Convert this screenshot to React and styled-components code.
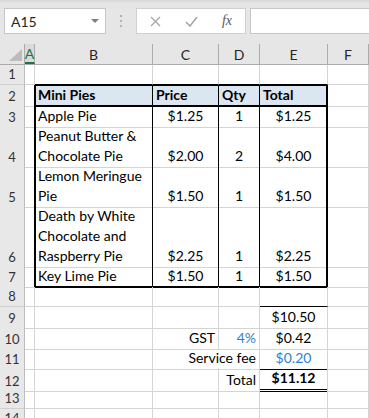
import styled, { createGlobalStyle } from 'styled-components'

const GlobalStyle = createGlobalStyle`
  html, body {
    margin: 0;
    padding: 0;
    background: #ffffff;
  }
  body {
    font-family: Lato, "Liberation Sans", sans-serif;
  }
`

const COLS = '25px 10px 118px 66px 41px 68px 1fr'
const GRID = '#d4d4d4'
const BLUE = '#2f80d0'

const Window = styled.div`
  width: 369px;
  height: 418px;
  overflow: hidden;
  background: #fff;
`

/* formula bar */
const Toolbar = styled.div`
  height: 44px;
  box-sizing: border-box;
  display: flex;
  align-items: flex-start;
  padding: 8px 0 0 4px;
  background: linear-gradient(#d8d8d8 0, #e6e6e6 4px, #e6e6e6 100%);
`

const NameBox = styled.div`
  width: 102px;
  height: 26px;
  box-sizing: border-box;
  border: 1px solid #c6c6c6;
  background: #fff;
  display: flex;
  align-items: center;
  justify-content: space-between;
  padding: 0 6px 0 6px;
  font-size: 14px;
  color: #262626;
`

const Caret = styled.span`
  width: 0;
  height: 0;
  border-left: 4px solid transparent;
  border-right: 4px solid transparent;
  border-top: 4px solid #808080;
`

const Grip = styled.div`
  width: 30px;
  height: 26px;
  display: flex;
  flex-direction: column;
  align-items: center;
  justify-content: center;
  gap: 3px;

  span {
    width: 2px;
    height: 2px;
    background: #b3b3b3;
  }
`

const FxButtons = styled.div`
  width: 110px;
  height: 26px;
  box-sizing: border-box;
  border: 1px solid #d0d0d0;
  background: #fff;
  display: flex;
`

const FxSlot = styled.div`
  width: 36px;
  display: flex;
  align-items: center;
  justify-content: center;
  font-family: "Liberation Serif", serif;
  font-style: italic;
  font-size: 14px;
  color: #595959;
`

const FormulaInput = styled.div`
  flex: 1;
  height: 26px;
  margin-left: 4px;
  box-sizing: border-box;
  border: 1px solid #c6c6c6;
  border-right: none;
  background: #fff;
`

/* sheet */
const HeaderRow = styled.div`
  display: grid;
  grid-template-columns: ${COLS};
  height: 20px;
  background: #e6e6e6;
  border-bottom: 1px solid #ababab;
`

const ColHead = styled.div`
  box-sizing: border-box;
  display: flex;
  align-items: center;
  justify-content: center;
  font-size: 14px;
  color: ${p => (p.$active ? '#217346' : '#262626')};
  background: ${p => (p.$active ? '#dadada' : 'transparent')};
  border-right: 1px solid #ababab;
  border-bottom: ${p => (p.$active ? '2px solid #217346' : 'none')};
`

const Corner = styled.div`
  border-right: 1px solid #ababab;
  display: flex;
  align-items: flex-end;
  justify-content: flex-end;
  padding: 0 2px 3px 0;

  span {
    width: 0;
    height: 0;
    border-left: 13px solid transparent;
    border-bottom: 12px solid #bcbcbc;
  }
`

const Row = styled.div`
  display: grid;
  grid-template-columns: ${COLS};
  height: ${p => p.$h}px;
`

const RowHead = styled.div`
  box-sizing: border-box;
  background: #e8e8e8;
  border-right: 1px solid #bdbdbd;
  border-bottom: 1px solid #cfcfcf;
  display: flex;
  align-items: flex-end;
  justify-content: center;
  line-height: 19px;
  font-size: 13px;
  color: #333;
`

const edge = v => (v === 'k' ? '1px solid #000' : v === 'n' ? '1px solid transparent' : v === 'd' ? '3px double #000' : `1px solid ${GRID}`)

const thick = s => {
  if (!s) return 'none'
  const parts = []
  if (s.includes('t')) parts.push('inset 0 1px 0 #000')
  if (s.includes('b')) parts.push('inset 0 -1px 0 #000')
  if (s.includes('l')) parts.push('inset 1px 0 0 #000')
  if (s.includes('r')) parts.push('inset -1px 0 0 #000')
  return parts.join(', ')
}

const Cell = styled.div`
  box-sizing: border-box;
  min-width: 0;
  display: flex;
  flex-direction: column;
  justify-content: flex-end;
  align-items: ${p => (p.$a === 'c' ? 'center' : p.$a === 'r' ? 'flex-end' : 'flex-start')};
  padding: 0 3px 1px 3px;
  border-right: ${p => edge(p.$r)};
  border-bottom: ${p => edge(p.$b)};
  box-shadow: ${p => thick(p.$th)};
  background: ${p => (p.$head ? '#dce6f1' : 'transparent')};
  font-size: 14px;
  line-height: 20px;
  font-weight: ${p => (p.$bold ? 700 : 400)};
  color: ${p => (p.$blue ? BLUE : '#000')};
  white-space: nowrap;
`

// table B2:E7 border helpers
const head = (t, first) => ({ t, a: 'l', head: true, bold: true, r: 'k', b: 'k', th: first ? 'tbl' : 'tb' })
const body = (t, a, opts = {}) => ({ t, a, r: 'k', b: 'g', ...opts })

const EMPTY = {}
const rows = [
  { n: 1, h: 20, cells: [EMPTY, { b: 'k' }, { b: 'k' }, { b: 'k' }, { b: 'k' }, EMPTY] },
  {
    n: 2, h: 21,
    cells: [{ r: 'k' }, head('Mini Pies', true), head('Price'), head('Qty'), { ...head('Total'), th: 'tbr' }, EMPTY],
  },
  {
    n: 3, h: 20,
    cells: [{ r: 'k' }, body('Apple Pie', 'l', { th: 'l' }), body('$1.25', 'c'), body('1', 'c'), body('$1.25', 'c', { th: 'r' }), EMPTY],
  },
  {
    n: 4, h: 40,
    cells: [{ r: 'k' }, body(['Peanut Butter &', 'Chocolate Pie'], 'l', { th: 'l' }), body('$2.00', 'c'), body('2', 'c'), body('$4.00', 'c', { th: 'r' }), EMPTY],
  },
  {
    n: 5, h: 40,
    cells: [{ r: 'k' }, body(['Lemon Meringue', 'Pie'], 'l', { th: 'l' }), body('$1.50', 'c'), body('1', 'c'), body('$1.50', 'c', { th: 'r' }), EMPTY],
  },
  {
    n: 6, h: 60,
    cells: [{ r: 'k' }, body(['Death by White', 'Chocolate and', 'Raspberry Pie'], 'l', { th: 'l' }), body('$2.25', 'c'), body('1', 'c'), body('$2.25', 'c', { th: 'r' }), EMPTY],
  },
  {
    n: 7, h: 21,
    cells: [{ r: 'k' }, body('Key Lime Pie', 'l', { th: 'lb', b: 'k' }), body('$1.50', 'c', { th: 'b', b: 'k' }), body('1', 'c', { th: 'b', b: 'k' }), body('$1.50', 'c', { th: 'rb', b: 'k' }), EMPTY],
  },
  { n: 8, h: 20, cells: [EMPTY, EMPTY, EMPTY, EMPTY, { b: 'k' }, EMPTY] },
  { n: 9, h: 21, cells: [EMPTY, EMPTY, EMPTY, EMPTY, { t: '$10.50', a: 'c' }, EMPTY] },
  { n: 10, h: 20, cells: [EMPTY, EMPTY, { t: 'GST', a: 'r' }, { t: '4%', a: 'r', blue: true }, { t: '$0.42', a: 'c' }, EMPTY] },
  { n: 11, h: 20, cells: [EMPTY, EMPTY, { r: 'n' }, { t: 'Service fee', a: 'r' }, { t: '$0.20', a: 'c', blue: true, b: 'k' }, EMPTY] },
  { n: 12, h: 20, cells: [EMPTY, EMPTY, EMPTY, { t: 'Total', a: 'r' }, { t: '$11.12', a: 'c', bold: true, b: 'd' }, EMPTY] },
  { n: 13, h: 21, cells: [EMPTY, EMPTY, EMPTY, EMPTY, EMPTY, EMPTY] },
  { n: 14, h: 20, cells: [EMPTY, EMPTY, EMPTY, EMPTY, EMPTY, EMPTY] },
]

const COL_LETTERS = ['A', 'B', 'C', 'D', 'E', 'F']

function CellText({ t }) {
  if (!t) return null
  const lines = Array.isArray(t) ? t : [t]
  return lines.map(line => <span key={line}>{line}</span>)
}

export default function App() {
  return (
    <Window>
      <GlobalStyle />
      <Toolbar>
        <NameBox>
          A15
          <Caret />
        </NameBox>
        <Grip>
          <span />
          <span />
          <span />
        </Grip>
        <FxButtons>
          <FxSlot>
            <svg width="11" height="11" viewBox="0 0 11 11">
              <path d="M1 1 L10 10 M10 1 L1 10" stroke="#a6a6a6" strokeWidth="1.3" fill="none" />
            </svg>
          </FxSlot>
          <FxSlot>
            <svg width="13" height="11" viewBox="0 0 13 11">
              <path d="M1 6 L5 10 L12 1" stroke="#a6a6a6" strokeWidth="1.6" fill="none" />
            </svg>
          </FxSlot>
          <FxSlot>fx</FxSlot>
        </FxButtons>
        <FormulaInput />
      </Toolbar>

      <HeaderRow>
        <Corner>
          <span />
        </Corner>
        {COL_LETTERS.map(l => (
          <ColHead key={l} $active={l === 'A'}>
            {l}
          </ColHead>
        ))}
      </HeaderRow>

      {rows.map(row => (
        <Row key={row.n} $h={row.h}>
          <RowHead>{row.n}</RowHead>
          {row.cells.map((c, i) => (
            <Cell
              key={i}
              $a={c.a}
              $r={c.r}
              $b={c.b}
              $th={c.th}
              $head={c.head}
              $bold={c.bold}
              $blue={c.blue}
            >
              <CellText t={c.t} />
            </Cell>
          ))}
        </Row>
      ))}
    </Window>
  )
}
